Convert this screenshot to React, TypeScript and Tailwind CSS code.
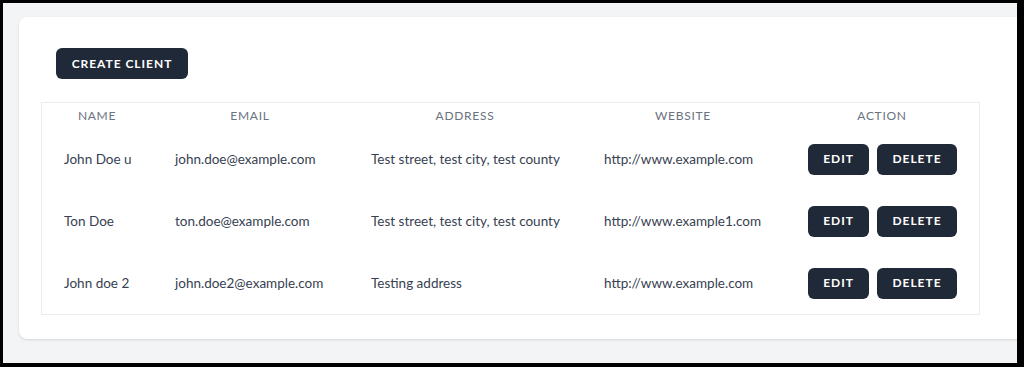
import React from "react";

const rows = [
  { name: "John Doe u", email: "john.doe@example.com", address: "Test street, test city, test county", website: "http://www.example.com" },
  { name: "Ton Doe", email: "ton.doe@example.com", address: "Test street, test city, test county", website: "http://www.example1.com" },
  { name: "John doe 2", email: "john.doe2@example.com", address: "Testing address", website: "http://www.example.com" },
];

export default function App() {
  return (
    <div
      className="w-[1024px] h-[367px] bg-black pt-[3px] pl-[3px] pr-[7px] pb-[4px] overflow-hidden"
      style={{ fontFamily: "Lato, 'Noto Sans', 'Liberation Sans', sans-serif" }}
    >
      <div className="w-full h-full bg-[#f3f4f6] pt-[14px] pl-[16px] overflow-hidden">
        <div className="w-[1040px] h-[322px] bg-white rounded-lg shadow-sm pt-[31px] pl-[22px]">
          <div className="pl-[15px]">
            <button className="w-[132px] h-[31px] rounded-md bg-[#1f2937] text-white text-[12px] font-bold tracking-[0.08em] uppercase flex items-center justify-center">
              Create Client
            </button>
          </div>
          <div className="mt-[23px] w-[939px] border border-[#ececec]">
            <table className="w-full table-fixed border-collapse">
              <colgroup>
                <col className="w-[110px]" />
                <col className="w-[196px]" />
                <col className="w-[234px]" />
                <col className="w-[202px]" />
                <col className="w-[196px]" />
              </colgroup>
              <thead>
                <tr className="h-[25px]">
                  {["Name", "Email", "Address", "Website", "Action"].map((h) => (
                    <th key={h} className="text-center text-[12px] font-normal uppercase tracking-[0.06em] text-[#6b7280] pt-[1px] align-middle">
                      {h}
                    </th>
                  ))}
                </tr>
              </thead>
              <tbody>
                {rows.map((r, i) => (
                  <tr key={i} className="h-[62px] text-[13.5px] text-[#374151]">
                    <td className="pl-[22px] whitespace-nowrap align-middle">{r.name}</td>
                    <td className="pl-[23px] whitespace-nowrap align-middle">{r.email}</td>
                    <td className="pl-[23px] whitespace-nowrap align-middle">{r.address}</td>
                    <td className="pl-[22px] whitespace-nowrap align-middle">{r.website}</td>
                    <td className="pl-[24px] align-middle">
                      <div className="flex gap-[8px]">
                        <button className="w-[61px] h-[31px] rounded-md bg-[#1f2937] text-white text-[12px] font-bold tracking-[0.08em] flex items-center justify-center">
                          EDIT
                        </button>
                        <button className="w-[80px] h-[31px] rounded-md bg-[#1f2937] text-white text-[12px] font-bold tracking-[0.08em] flex items-center justify-center">
                          DELETE
                        </button>
                      </div>
                    </td>
                  </tr>
                ))}
              </tbody>
            </table>
          </div>
        </div>
      </div>
    </div>
  );
}
